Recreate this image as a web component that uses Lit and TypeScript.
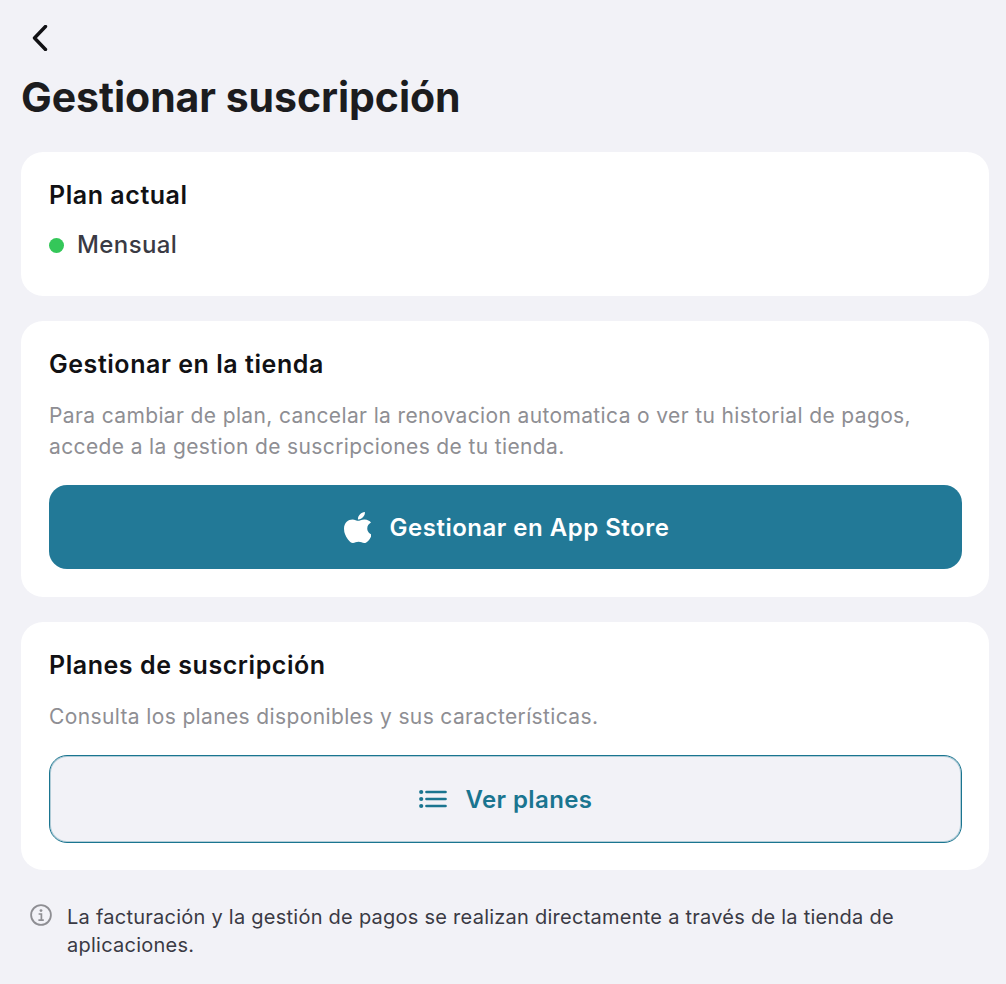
import { LitElement, css, html } from 'lit'
import { customElement } from 'lit/decorators.js'

@customElement('app-root')
export class AppRoot extends LitElement {
  render() {
    return html`
      <div class="page">
        <button class="back" aria-label="Volver">
          <svg width="18" height="26" viewBox="0 0 18 26" fill="none">
            <path d="M14.5 1.5 3.5 13l11 11.5" stroke="#111114" stroke-width="3.4" stroke-linecap="round" stroke-linejoin="round" />
          </svg>
        </button>
        <h1>Gestionar suscripción</h1>

        <section class="card plan">
          <h2>Plan actual</h2>
          <div class="status"><span class="dot"></span><span>Mensual</span></div>
        </section>

        <section class="card store">
          <h2>Gestionar en la tienda</h2>
          <p>Para cambiar de plan, cancelar la renovacion automatica o ver tu historial de pagos, accede a la gestion de suscripciones de tu tienda.</p>
          <button class="btn primary">
            <svg width="27" height="31" viewBox="4 32 365 448" preserveAspectRatio="none" fill="#fff">
              <path d="M318.7 268.7c-.2-36.7 16.4-64.4 50-84.8-18.8-26.9-47.2-41.7-84.7-44.6-35.5-2.8-74.3 20.7-88.5 20.7-15 0-49.4-19.7-76.4-19.7C63.3 141.2 4 184.8 4 273.5q0 39.3 14.4 81.2c12.8 36.7 59 126.7 107.2 125.2 25.2-.6 43-17.9 75.8-17.9 31.8 0 48.3 17.9 76.4 17.9 48.6-.7 90.4-82.5 102.6-119.3-65.2-30.7-61.7-90-61.7-91.9zm-56.6-164.2c27.3-32.4 24.8-61.9 24-72.5-24.1 1.4-52 16.4-67.9 34.9-17.5 19.8-27.8 44.3-25.6 71.9 26.1 2 49.9-11.4 69.5-34.3z" />
            </svg>
            <span>Gestionar en App Store</span>
          </button>
        </section>

        <section class="card plans">
          <h2>Planes de suscripción</h2>
          <p>Consulta los planes disponibles y sus características.</p>
          <button class="btn outline">
            <svg width="28" height="20" viewBox="0 0 28 20" fill="none" stroke="#1a7590" stroke-width="2.7" stroke-linecap="round">
              <path d="M7.5 3h19M7.5 10h19M7.5 17h19" />
              <circle cx="2.2" cy="3" r="2.1" fill="#1a7590" stroke="none" />
              <circle cx="2.2" cy="10" r="2.1" fill="#1a7590" stroke="none" />
              <circle cx="2.2" cy="17" r="2.1" fill="#1a7590" stroke="none" />
            </svg>
            <span>Ver planes</span>
          </button>
        </section>

        <div class="note">
          <svg width="22" height="22" viewBox="0 0 22 22" fill="none">
            <circle cx="11" cy="11" r="9.9" stroke="#8e8e93" stroke-width="1.8" />
            <circle cx="11" cy="6.6" r="1.4" fill="#8e8e93" />
            <path d="M8.6 10h2.8v6M8.4 16.2h5.4" stroke="#8e8e93" stroke-width="1.7" />
          </svg>
          <span>La facturación y la gestión de pagos se realizan directamente a través de la tienda de aplicaciones.</span>
        </div>
      </div>
    `
  }

  static styles = css`
    :host {
      display: block;
      font-family: Inter, 'Liberation Sans', sans-serif;
    }

    .page {
      box-sizing: border-box;
      min-height: 984px;
      padding: 24px 17px 0 21px;
      background: #f2f2f7;
      display: flex;
      flex-direction: column;
    }

    .back {
      width: 40px;
      height: 28px;
      padding: 0 0 0 10px;
      border: 0;
      background: none;
      display: flex;
      align-items: center;
    }

    h1 {
      margin: 15px 0 25px;
      font-size: 41px;
      line-height: 60px;
      font-weight: 700;
      letter-spacing: -0.05px;
      color: #1c1c1e;
    }

    .card {
      background: #fff;
      border-radius: 22px;
      padding: 28px 27px 28px 28px;
      margin-bottom: 25px;
    }

    h2 {
      margin: 0;
      font-size: 25px;
      line-height: 30px;
      font-weight: 600;
      letter-spacing: 0.55px;
      color: #111114;
    }

    .plan {
      height: 144px;
      box-sizing: border-box;
    }

    .plans {
      padding-bottom: 27px;
    }

    .status {
      margin-top: 20px;
      display: flex;
      align-items: center;
      gap: 13px;
      font-size: 24px;
      line-height: 30px;
      font-weight: 550;
      letter-spacing: 0.4px;
      color: #3a3a44;
    }

    .dot {
      width: 15px;
      height: 15px;
      border-radius: 50%;
      background: #34c759;
    }

    p {
      margin: 21px 0 23px;
      font-size: 21px;
      line-height: 31px;
      letter-spacing: 0.37px;
      color: #8e8e93;
    }

    .btn {
      width: 100%;
      box-sizing: border-box;
      display: flex;
      align-items: center;
      justify-content: center;
      border-radius: 18px;
      font-family: inherit;
      font-size: 24px;
      font-weight: 600;
    }

    .primary {
      height: 84px;
      gap: 19px;
      padding-left: 8px;
      border: 0;
      background: #227997;
      color: #fff;
      letter-spacing: 0.5px;
    }

    .outline {
      height: 88px;
      gap: 19px;
      border: 1px solid #1a7590;
      box-shadow: inset 0 0 0 1px rgba(26, 117, 144, 0.3);
      background: #f2f2f7;
      color: #1a7590;
      letter-spacing: 0.4px;
    }

    .note {
      margin: 8px 0 0 9px;
      display: flex;
      gap: 15px;
      font-size: 20px;
      line-height: 28px;
      letter-spacing: 0.25px;
      color: #3a3a44;
    }

    .note svg {
      flex: none;
      margin-top: 1px;
    }
  `
}

declare global {
  interface HTMLElementTagNameMap {
    'app-root': AppRoot
  }
}
